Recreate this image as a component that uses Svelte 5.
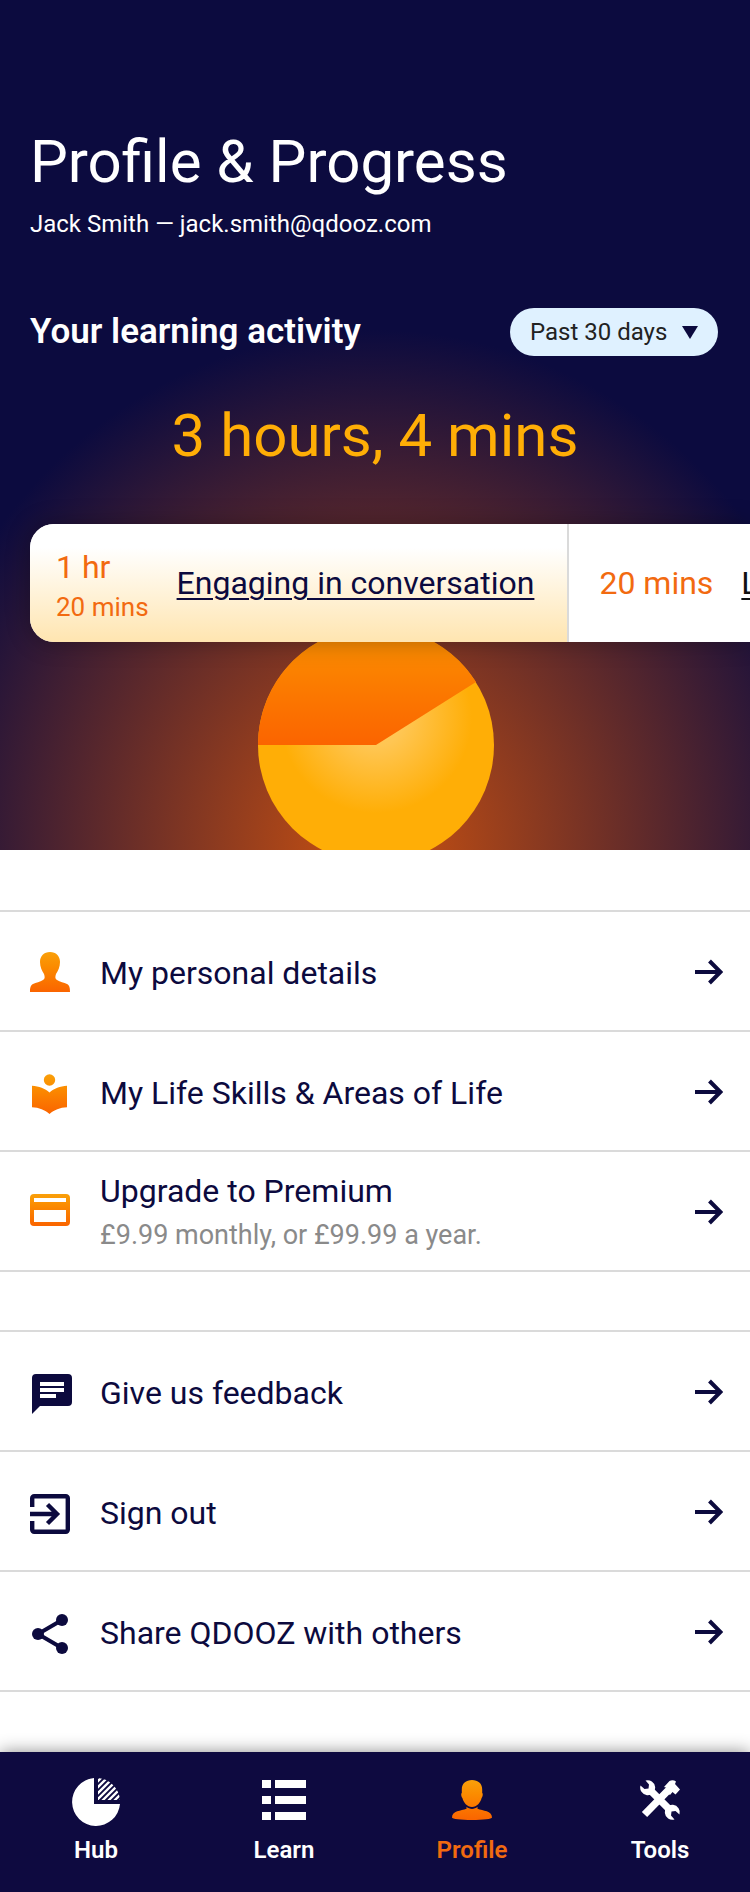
<script>
  const accountLinks = [
    { icon: 'person', label: 'My personal details' },
    { icon: 'reader', label: 'My Life Skills & Areas of Life' },
    { icon: 'card', label: 'Upgrade to Premium', note: '£9.99 monthly, or £99.99 a year.' }
  ];
  const otherLinks = [
    { icon: 'chat', label: 'Give us feedback' },
    { icon: 'exit', label: 'Sign out' },
    { icon: 'share', label: 'Share QDOOZ with others' }
  ];
  const groups = [accountLinks, otherLinks];

  const tabs = [
    { icon: 'hub', label: 'Hub' },
    { icon: 'learn', label: 'Learn' },
    { icon: 'profile', label: 'Profile', active: true },
    { icon: 'tools', label: 'Tools' }
  ];

  let period = $state('Past 30 days');
</script>

<svg class="defs" aria-hidden="true">
  <defs>
    <linearGradient id="flame" gradientUnits="userSpaceOnUse" x1="0" y1="0" x2="0" y2="40">
      <stop offset="0" stop-color="#f9a00a" />
      <stop offset="0.35" stop-color="#fb8c00" />
      <stop offset="1" stop-color="#fa6400" />
    </linearGradient>
    <linearGradient id="flame-card" gradientUnits="userSpaceOnUse" x1="0" y1="0" x2="0" y2="32">
      <stop offset="0" stop-color="#f9a00a" />
      <stop offset="0.35" stop-color="#fb8c00" />
      <stop offset="1" stop-color="#fa6400" />
    </linearGradient>
  </defs>
</svg>

<div class="page">
  <header class="hero">
    <svg class="sun" viewBox="0 0 236 236" aria-hidden="true">
      <defs>
        <radialGradient id="core" gradientUnits="userSpaceOnUse" cx="118" cy="90" r="96">
          <stop offset="0" stop-color="#ffc95c" />
          <stop offset="0.3" stop-color="#ffc653" />
          <stop offset="1" stop-color="#ffae06" />
        </radialGradient>
        <linearGradient id="slice" x1="0" y1="0" x2="0" y2="1">
          <stop offset="0" stop-color="#fb9200" />
          <stop offset="1" stop-color="#fb6400" />
        </linearGradient>
      </defs>
      <circle cx="118" cy="118" r="118" fill="url(#core)" />
      <path d="M118 118H0A118 118 0 0 1 218 55Z" fill="url(#slice)" />
    </svg>

    <h1>Profile &amp; Progress</h1>
    <p class="who">Jack Smith — jack.smith@qdooz.com</p>

    <div class="activity">
      <h2>Your learning activity</h2>
      <div class="picker">
        <select bind:value={period} aria-label="Period">
          <option>Past 30 days</option>
          <option>Past 7 days</option>
        </select>
        <svg viewBox="0 0 16 13" aria-hidden="true"><path d="M0 0H16L8 13Z" fill="#0c0a3e" /></svg>
      </div>
    </div>

    <p class="total">3 hours, 4 mins</p>

    <div class="breakdown">
      <div class="skill lead">
        <p class="time">1 hr<small>20 mins</small></p>
        <a href="#conversation">Engaging in conversation</a>
      </div>
      <div class="skill">
        <p class="time">20 mins</p>
        <a class="plain" href="#listening">Listening</a>
      </div>
    </div>
  </header>

  <main>
    {#each groups as group}
      <ul class="menu">
        {#each group as item}
          <li>
            <a href="#{item.icon}">
              <svg class="icon" viewBox="0 0 40 40" aria-hidden="true">
                {#if item.icon === 'person'}
                  <path fill="url(#flame)" d="M20 0C26 0 30 4 30 10C30 15 28 19 26 22C25 25 25 27 27 28C30 30 34 30.500 37 32C39.500 33.500 40 35.500 40 40H0C0 35.500 .5 33.500 3 32C6 30.500 10 30 13 28C15 27 15 25 14 22C12 19 10 15 10 10C10 4 14 0 20 0Z" />
                {:else if item.icon === 'reader'}
                  <g transform="translate(0 2)" fill="url(#flame)">
                    <circle cx="19.500" cy="6" r="5.700" />
                    <path d="M19.500 18.500C15 14.500 9 12 2 11.700V33.300C9 33.500 15 36 19.500 40C24 36 30 33.500 37 33.300V11.700C30 12 24 14.500 19.500 18.500Z" />
                  </g>
                {:else if item.icon === 'card'}
                  <path transform="translate(0 2)" fill="url(#flame-card)" fill-rule="evenodd" d="M4 0H36A4 4 0 0 1 40 4V28A4 4 0 0 1 36 32H4A4 4 0 0 1 0 28V4A4 4 0 0 1 4 0ZM4 4V8H36V4ZM4 16V28H36V16Z" />
                {:else if item.icon === 'chat'}
                  <path transform="translate(2 2)" fill="#0c0a3e" fill-rule="evenodd" d="M4 0H36A4 4 0 0 1 40 4V28A4 4 0 0 1 36 32H8L0 40V4A4 4 0 0 1 4 0ZM8 8V12H32V8ZM8 14V18H32V14ZM8 20V24H24V20Z" />
                {:else if item.icon === 'exit'}
                  <g transform="translate(0 2)" fill="none" stroke="#0c0a3e" stroke-width="4.400">
                    <path d="M2.200 13V4.200A2 2 0 0 1 4.200 2.200H35.800A2 2 0 0 1 37.800 4.200V35.800A2 2 0 0 1 35.800 37.800H4.200A2 2 0 0 1 2.200 35.800V27" />
                    <path d="M0 20H27M17.500 10.500L27 20L17.500 29.500" />
                  </g>
                {:else}
                  <g transform="translate(0 2)">
                    <path d="M32 6L8 20L32 34" fill="none" stroke="#0c0a3e" stroke-width="4" />
                    <circle cx="32" cy="6" r="6" fill="#0c0a3e" />
                    <circle cx="8" cy="20" r="6" fill="#0c0a3e" />
                    <circle cx="32" cy="34" r="6" fill="#0c0a3e" />
                  </g>
                {/if}
              </svg>
              <span class="label">
                {item.label}
                {#if item.note}<small>{item.note}</small>{/if}
              </span>
              <svg class="arrow" viewBox="0 0 28 26" aria-hidden="true">
                <path d="M0 13H25.500M14.500 2L25.500 13L14.500 24" fill="none" stroke="#0c0a3e" stroke-width="4" />
              </svg>
            </a>
          </li>
        {/each}
      </ul>
    {/each}
  </main>

  <nav>
    {#each tabs as tab}
      <a href="#{tab.icon}" class:active={tab.active} aria-current={tab.active ? 'page' : undefined}>
        <svg viewBox="0 0 48 48" aria-hidden="true">
          {#if tab.icon === 'hub'}
            <defs>
              <clipPath id="quarter"><path d="M26 22V0A24 24 0 0 1 48 22Z" /></clipPath>
            </defs>
            <path fill="#fff" d="M22 0A24 24 0 1 0 48 26H22Z" />
            <path clip-path="url(#quarter)" stroke="#fff" stroke-width="2.300" d="M20 9L40 -11M20 15L44 -9M20 21L47 -6M20 27L50 -3M20 33L50 3M20 39L50 9M20 45L50 15M20 51L50 21" />
          {:else if tab.icon === 'learn'}
            <path fill="#fff" d="M2 2H11V10H2ZM15 2H46V10H15ZM2 18H11V26H2ZM15 18H46V26H15ZM2 34H11V42H2ZM15 34H46V42H15Z" />
          {:else if tab.icon === 'profile'}
            <g transform="translate(4 2)" fill="url(#flame)">
              <path d="M20 0C26 0 30.200 3.500 30.200 9.500V13C31.200 13.500 30.800 17 29.600 18C28.500 22.500 25 27 20 27C15 27 11.500 22.500 10.400 18C9.200 17 8.800 13.500 9.800 13V9.500C9.800 3.500 14 0 20 0Z" />
              <path d="M14.500 26.800C16 28.200 18 28.900 20 28.900C22 28.900 24 28.200 25.500 26.800V28.800C31 31 40 30.500 40 37.500C40 39 31 40 20 40C9 40 0 39 0 37.500C0 30.500 9 31 14.500 28.800Z" />
            </g>
          {:else}
            <g transform="translate(4 2)" fill="#fff">
              <path d="M4.500 34.500L30 8.500M10 10L30 30" fill="none" stroke="#fff" stroke-width="7.400" />
              <path d="M24 7L29.500 1Q33 -.5 36 1.500L35 4L40 9.500L35.500 14.500L32.500 12L30 15L24.500 10.500L27.500 8Z" />
              <path d="M5.500 .5L9 4.500L8.500 8.500L4.500 9L.5 5.500A7.500 7.500 0 1 0 5.500 .5Z" />
              <path d="M34.500 39.500L31 35.500L31.500 31.500L35.500 31L39.500 34.500A7.500 7.500 0 1 0 34.500 39.500Z" />
            </g>
          {/if}
        </svg>
        <span>{tab.label}</span>
      </a>
    {/each}
  </nav>
</div>

<style>
  :global(body) {
    background: #fff;
  }
  h1, h2, p, ul {
    margin: 0;
    padding: 0;
    font-weight: 400;
  }
  a {
    color: inherit;
    text-decoration: none;
  }
  small {
    display: block;
    font-size: 26px;
  }
  .defs {
    position: absolute;
    width: 0;
    height: 0;
  }
  .page {
    font-family: Roboto, "Liberation Sans", sans-serif;
    font-size: 32px;
    color: #0c0a3e;
  }

  .hero {
    position: relative;
    overflow: hidden;
    padding: 124px 0 208px 30px;
    color: #fff;
    background:
      radial-gradient(480px 520px at 50% 100%, #cc5210, #0c0b3f) #0c0b3f;
  }
  .sun {
    position: absolute;
    left: 50%;
    bottom: -13px;
    width: 236px;
    height: 236px;
    margin-left: -117px;
  }
  h1 {
    font-size: 60px;
    line-height: 76px;
  }
  .who {
    font-size: 24px;
    line-height: 32px;
    padding-top: 8px;
  }
  .activity {
    display: flex;
    justify-content: space-between;
    align-items: center;
    padding: 68px 32px 0 0;
  }
  h2 {
    font-size: 35px;
    line-height: 48px;
    font-weight: 600;
  }
  .picker {
    position: relative;
    width: 208px;
  }
  .picker select {
    appearance: none;
    width: 100%;
    height: 48px;
    padding: 0 44px 0 20px;
    border: 0;
    border-radius: 24px;
    background: #dff1ff;
    color: #222;
    font: inherit;
    font-size: 24px;
  }
  .picker svg {
    position: absolute;
    right: 20px;
    top: 18px;
    width: 16px;
    height: 13px;
    pointer-events: none;
  }
  .total {
    padding: 42px 30px 0 0;
    font-size: 60px;
    line-height: 76px;
    text-align: center;
    color: #ffae06;
  }
  .breakdown {
    position: relative;
    display: flex;
    height: 118px;
    margin-top: 50px;
    overflow: hidden;
    border-radius: 24px 0 0 24px;
    background: #fff;
    color: #0c0a3e;
    white-space: nowrap;
    box-shadow: 0 0 24px rgba(0, 0, 0, 0.3);
  }
  .skill {
    display: flex;
    flex: none;
    align-items: center;
    gap: 28px;
    padding: 0 30px;
  }
  .lead {
    padding: 0 33px 0 26px;
    border-right: 2px solid #dadada;
    background: linear-gradient(#fff 20%, #ffe5b0);
  }
  .time {
    line-height: 40px;
    color: #f26a10;
  }
  .lead .time {
    padding-top: 8px;
  }
  .skill a {
    text-decoration: underline;
    text-decoration-thickness: 2px;
    text-underline-offset: 4px;
  }
  .plain {
    color: #111;
  }

  .menu {
    list-style: none;
    padding-top: 60px;
  }
  .menu li {
    border-top: 2px solid #dadada;
  }
  .menu li:last-child {
    border-bottom: 2px solid #dadada;
    margin-bottom: -2px;
  }
  .menu a {
    display: flex;
    align-items: center;
    gap: 30px;
    min-height: 118px;
    box-sizing: border-box;
    padding: 2px 27px 0 30px;
  }
  .icon {
    flex: none;
    width: 40px;
    height: 40px;
    overflow: visible;
  }
  .label {
    flex: 1;
    padding-top: 2px;
    line-height: 44px;
  }
  .label small {
    font-size: 27px;
    color: #8a8a8a;
  }
  .arrow {
    flex: none;
    width: 28px;
    height: 26px;
  }

  nav {
    display: flex;
    justify-content: space-between;
    margin-top: 62px;
    padding: 26px 42px 26px 48px;
    background: #0e0a40;
    color: #fff;
    box-shadow: 0 0 16px rgba(0, 0, 0, 0.45);
  }
  nav a {
    display: flex;
    flex-direction: column;
    align-items: center;
    gap: 8px;
    width: 96px;
    font-size: 24px;
    line-height: 32px;
    font-weight: 600;
  }
  nav svg {
    width: 48px;
    height: 48px;
  }
  nav .active {
    color: #f26a10;
  }
</style>
